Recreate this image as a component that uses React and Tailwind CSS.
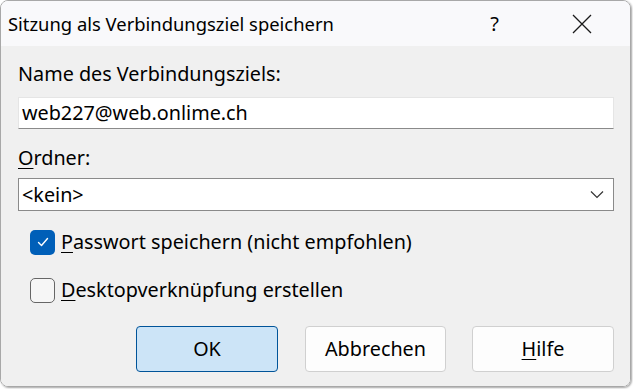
import React from "react";

const font = { fontFamily: '"Noto Sans", "Open Sans", sans-serif' };

const Checkbox = ({ checked, label, accessKey }) => (
  <label className="flex items-center h-[26px]">
    {checked ? (
      <span className="w-[25px] h-[25px] rounded-[5px] bg-[#005fb8] flex items-center justify-center">
        <svg width="14" height="14" viewBox="0 0 14 14" fill="none">
          <path d="M2.5 7.5 L5.5 10.5 L11.5 3.5" stroke="white" strokeWidth="1.4" strokeLinecap="round" strokeLinejoin="round" />
        </svg>
      </span>
    ) : (
      <span className="w-[25px] h-[25px] rounded-[5px] border-[1.5px] border-[#666666] bg-[#f6f6f6]" />
    )}
    <span className="ml-[6px] text-[19.8px] leading-[26px] text-black">
      <span className="underline underline-offset-[3px]">{accessKey}</span>
      {label}
    </span>
  </label>
);

export default function App() {
  return (
    <div className="w-[633px] h-[389px] bg-white" style={font}>
      <div className="w-[631px] h-[387px] rounded-[8px] border border-[#a8a8a8] overflow-hidden flex flex-col shadow-[1px_1px_2px_rgba(0,0,0,0.35)]">
        {/* title bar */}
        <div className="h-[45px] bg-[#f9f9fb] flex items-center shrink-0">
          <span className="ml-[7px] text-[18.4px] text-black">Sitzung als Verbindungsziel speichern</span>
          <span className="ml-auto mr-[73px] text-[20px] text-black">?</span>
          <svg className="mr-[38px]" width="20" height="20" viewBox="0 0 20 20">
            <path d="M1 1 L19 19 M19 1 L1 19" stroke="#1a1a1a" strokeWidth="1.3" />
          </svg>
        </div>

        {/* body */}
        <div className="flex-1 bg-[#f0f0f0] pl-[17px] pr-[16px] flex flex-col">
          <div className="mt-[15px] text-[19.8px] text-black leading-[26px]">Name des Verbindungsziels:</div>
          <div className="mt-[10px] h-[32px] bg-white border border-[#e5e5e5] border-b-[#8a8a8a] flex items-center pl-[3px] text-[19.8px] leading-[26px] text-black">
            web227@web.onlime.ch
          </div>
          <div className="mt-[16px] text-[19.8px] text-black leading-[26px]">
            <span className="underline underline-offset-[3px]">O</span>rdner:
          </div>
          <div className="mt-[7px] h-[33px] bg-white border border-[#8a8a8a] flex items-center pl-[3px] pr-[9px] text-[19.8px] leading-[26px] text-black">
            <span>&lt;kein&gt;</span>
            <svg className="ml-auto" width="14" height="9" viewBox="0 0 14 9">
              <path d="M1 1.5 L7 7.5 L13 1.5" fill="none" stroke="#333" strokeWidth="1.2" />
            </svg>
          </div>

          <div className="mt-[18px] pl-[12px] flex flex-col gap-[22px]">
            <Checkbox checked accessKey="P" label="asswort speichern (nicht empfohlen)" />
            <Checkbox accessKey="D" label="esktopverknüpfung erstellen" />
          </div>

          <div className="mt-[23px] flex justify-end">
            <button className="w-[142px] h-[46px] rounded-[4px] bg-[#cce4f7] border border-[#005499] text-[19.8px] text-black">
              OK
            </button>
            <button className="ml-[27px] w-[141px] h-[46px] rounded-[4px] bg-[#fdfdfd] border border-[#d0d0d0] text-[19.8px] text-black">
              Abbrechen
            </button>
            <button className="ml-[26px] w-[142px] h-[46px] rounded-[4px] bg-[#fdfdfd] border border-[#d0d0d0] text-[19.8px] text-black">
              <span className="underline underline-offset-[3px]">H</span>ilfe
            </button>
          </div>
        </div>
      </div>
    </div>
  );
}
